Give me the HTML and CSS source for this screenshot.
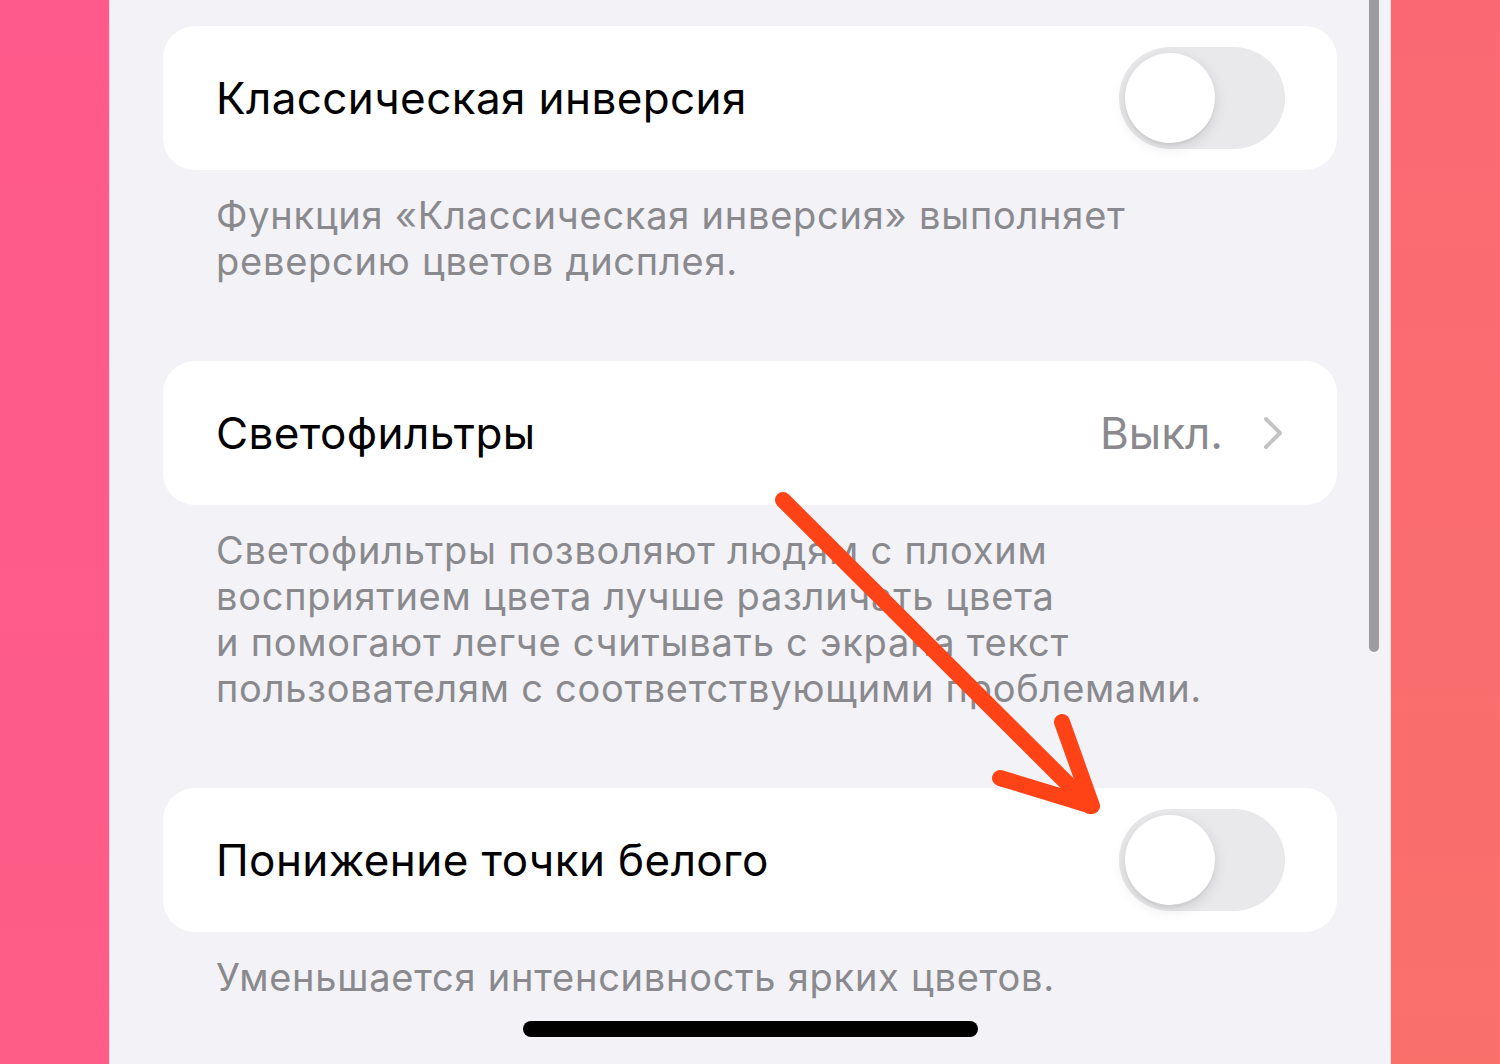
FILE: index.html
```html
<!DOCTYPE html>
<html lang="ru">
<head>
<meta charset="utf-8">
<link rel="stylesheet" href="styles.css">
</head>
<body>
<div class="band band-left"></div>
<main class="screen">
  <section class="group">
    <div class="card">
      <span class="title">Классическая инверсия</span>
      <span class="toggle"><span class="knob"></span></span>
    </div>
    <p class="caption">Функция «Классическая инверсия» выполняет<br>реверсию цветов дисплея.</p>
  </section>
  <section class="group">
    <div class="card">
      <span class="title">Светофильтры</span>
      <span class="value">Выкл.
        <svg class="chev" width="20" height="34" viewBox="0 0 20 34"><path d="M3 3 L17 17 L3 31" fill="none" stroke="#c4c4c7" stroke-width="4" stroke-linecap="round" stroke-linejoin="round"/></svg>
      </span>
    </div>
    <p class="caption">Светофильтры позволяют людям с плохим<br>восприятием цвета лучше различать цвета<br>и помогают легче считывать с экрана текст<br>пользователям с соответствующими проблемами.</p>
  </section>
  <section class="group">
    <div class="card">
      <span class="title">Понижение точки белого</span>
      <span class="toggle"><span class="knob"></span></span>
    </div>
    <p class="caption">Уменьшается интенсивность ярких цветов.</p>
  </section>
  <div class="scrollbar"></div>
  <div class="home"></div>
  <svg class="arrow" width="1280" height="1064" viewBox="110 0 1280 1064">
    <g fill="none" stroke="#ff4316" stroke-width="16" stroke-linecap="round" stroke-linejoin="round">
      <path d="M783 500 L1090 806"/>
      <path d="M1062 722 L1092 806 L1000 778"/>
    </g>
  </svg>
</main>
<div class="band band-right"></div>
</body>
</html>
```
FILE: styles.css
```css
html, body {
  margin: 0;
  padding: 0;
  height: 100%;
}
body {
  display: flex;
  width: 1500px;
  height: 1064px;
  overflow: hidden;
  font-family: "Inter", "Noto Sans", "Liberation Sans", sans-serif;
  background: linear-gradient(100deg, #ff5a8b 0%, #fb6679 55%, #f9716a 100%);
}
.band {
  width: 110px;
  flex: none;
}
.band-left {
  background: linear-gradient(180deg, #ff5a8b 0%, #fe5d87 100%);
  border-right: 1px solid #fbd9e4;
  box-sizing: border-box;
}
.band-right {
  background: linear-gradient(180deg, #fa6973 0%, #f9706b 100%);
  border-left: 1px solid #f6dfe2;
  box-sizing: border-box;
}
.screen {
  position: relative;
  width: 1280px;
  flex: none;
  background: #f2f2f7;
  padding: 26px 53px 0 53px;
  box-sizing: border-box;
  display: flex;
  flex-direction: column;
  gap: 77px;
}
.group {
  display: flex;
  flex-direction: column;
}
.card {
  height: 144px;
  background: #ffffff;
  border-radius: 32px;
  display: flex;
  align-items: center;
  justify-content: space-between;
  padding: 0 52px 0 53px;
  box-sizing: border-box;
}
.title {
  font-size: 44px;
  color: #000;
  letter-spacing: 0.4px;
}
.value {
  display: flex;
  align-items: center;
  gap: 40px;
  font-size: 44px;
  color: #8a8a8e;
  padding-right: 2px;
}
.chev {
  display: block;
}
.toggle {
  position: relative;
  width: 166px;
  height: 102px;
  border-radius: 51px;
  background: #e9e9eb;
  flex: none;
}
.knob {
  position: absolute;
  left: 6px;
  top: 6px;
  width: 90px;
  height: 90px;
  border-radius: 50%;
  background: #fff;
  box-shadow: 0 4px 14px rgba(0,0,0,0.12), 0 3px 2px rgba(0,0,0,0.04);
}
.caption {
  margin: 0;
  padding: 22px 0 0 53px;
  font-size: 38px;
  line-height: 46px;
  color: #8a8a8e;
  letter-spacing: 0.75px;
}
.scrollbar {
  position: absolute;
  left: 1259px;
  top: -6px;
  width: 10px;
  height: 658px;
  border-radius: 5px;
  background: #9c9ca1;
}
.home {
  position: absolute;
  left: 413px;
  top: 1021px;
  width: 455px;
  height: 16px;
  border-radius: 8px;
  background: #000;
}
.arrow {
  position: absolute;
  left: 0;
  top: 0;
  pointer-events: none;
}
```
